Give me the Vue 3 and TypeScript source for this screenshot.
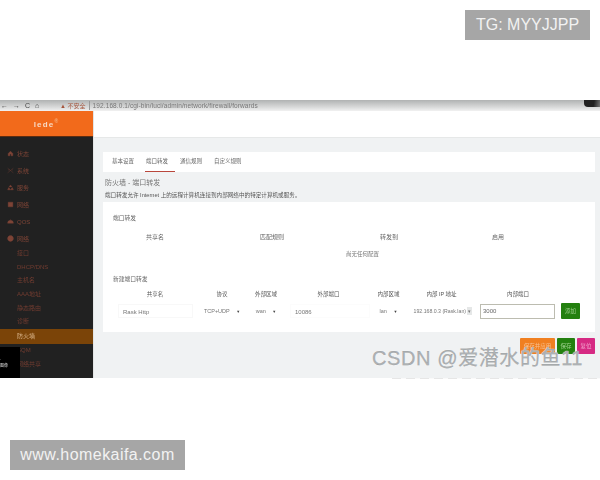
<script setup lang="ts">
const topNav = [
  { label: '状态', icon: 'M2 6 6 2l4 4v4H7V7H5v3H2z' },
  { label: '系统', icon: 'M1 2l10 8M11 2 1 10M2 5h3M8 5h2' },
  { label: '服务', icon: 'M6 1.5 8.5 5h-5zM1 10l2-4 3 4zM6 10l3-4 2 4z' },
  { label: '网络', icon: 'M2 2h8v8H2zM2 5h8' },
  { label: 'QOS', icon: 'M1 9a5 5 0 0 1 10 0zM6 2v3' },
  { label: '网络', icon: 'M6 1a5 5 0 1 0 .01 0zM3 6h6' },
]
const subNav = ['接口', 'DHCP/DNS', '主机名', 'AAA地址', '静态路由', '诊断']
const afterNav = ['防火墙', 'SQM', '网络共享']
const tabs = ['基本设置', '端口转发', '通信规则', '自定义规则']
const ruleCols = ['共享名', '匹配规则', '转发到', '启用']
const formCols = ['共享名', '协议', '外部区域', '外部端口', '内部区域', '内部 IP 地址', '内部端口', '']
</script>

<template>
  <main class="page">
    <div class="shot">
      <div class="urlbar">
        <span class="nav-glyphs">← → C ⌂</span>
        <span class="warn">▲ 不安全</span>
        <span class="url">192.168.0.1/cgi-bin/luci/admin/network/firewall/forwards</span>
        <span class="spacer"></span>
        <span class="avatar"></span>
      </div>
      <div class="layout">
        <aside class="sidebar">
          <div class="logo">lede<sup>®</sup></div>
          <nav class="menu">
            <div v-for="(n, i) in topNav" :key="i" class="item">
              <svg viewBox="0 0 12 12" class="ico"><path :d="n.icon" fill="#7d4436" stroke="#7d4436" stroke-width=".6" /></svg>
              <span>{{ n.label }}</span>
            </div>
            <div v-for="s in subNav" :key="s" class="sub">{{ s }}</div>
            <div class="sub active">{{ afterNav[0] }}</div>
            <div v-for="s in afterNav.slice(1)" :key="s" class="sub">{{ s }}</div>
          </nav>
          <div class="popup">
            <span>·</span>
            <span>图像</span>
          </div>
        </aside>
        <section class="content">
          <div class="head"></div>
          <div class="body">
            <div class="tabs">
              <span v-for="(t, i) in tabs" :key="t" class="tab" :class="{ on: i === 1 }">{{ t }}</span>
            </div>
            <h1 class="title">防火墙 - 端口转发</h1>
            <p class="desc">端口转发允许 Internet 上的远程计算机连接到内部网络中的特定计算机或服务。</p>
            <div class="card">
              <h2 class="sec first">端口转发</h2>
              <div class="rule-head">
                <span v-for="c in ruleCols" :key="c">{{ c }}</span>
              </div>
              <div class="empty">尚无任何配置</div>
              <h2 class="sec second">新建端口转发</h2>
              <div class="form-grid">
                <span v-for="(c, i) in formCols" :key="i" class="fh">{{ c }}</span>
                <span class="field name">Rask Http</span>
                <span class="sel">TCP+UDP <i>▼</i></span>
                <span class="sel">wan <i>▼</i></span>
                <span class="field ext">10086</span>
                <span class="sel">lan <i>▼</i></span>
                <span class="sel ip">192.168.0.3 (Rask.lan) <b>▾</b></span>
                <span class="focus">3000</span>
                <span class="add">添加</span>
              </div>
            </div>
            <div class="actions">
              <span class="btn orange">保存并应用</span>
              <span class="btn green">保存</span>
              <span class="btn pink">复位</span>
            </div>
          </div>
        </section>
      </div>
    </div>
    <div class="strip"></div>
    <div class="mark">CSDN @爱潜水的鱼11</div>
    <div class="badge tg">TG: MYYJJPP</div>
    <div class="badge site">www.homekaifa.com</div>
  </main>
</template>

<style>
html, body { margin: 0; background: #fff; }
</style>

<style scoped>
.page {
  position: relative;
  width: 600px;
  height: 480px;
  padding-top: 100px;
  box-sizing: border-box;
  overflow: hidden;
  background: #fff;
  font-family: "Liberation Sans", "Noto Sans CJK SC", sans-serif;
}
.shot {
  height: 278px;
  display: flex;
  flex-direction: column;
  overflow: hidden;
  filter: blur(0.7px);
}
.urlbar {
  height: 11px;
  flex: none;
  display: flex;
  align-items: center;
  gap: 7px;
  padding: 0;
  background: linear-gradient(#b0b2b2, #dcdddd 70%, #f1f1f1);
  font-size: 6.5px;
  color: #555;
  white-space: nowrap;
}
.nav-glyphs { font-size: 7px; color: #444; word-spacing: 3px; width: 52px; padding-left: 1px; }
.warn { color: #a5543c; border-right: 1px solid #999; padding-right: 3px; font-size: 6px; }
.url { color: #777; margin-left: -4px; letter-spacing: 0.1px; }
.spacer { flex: 1; }
.avatar { width: 16px; height: 7px; margin: -4px 0 0; background: linear-gradient(100deg, #222 60%, #777); border-radius: 0 0 0 4px; }
.layout { flex: 1; display: flex; min-height: 0; }
.sidebar {
  position: relative;
  width: 93px;
  flex: none;
  background: #212121;
  overflow: hidden;
}
.logo {
  height: 25px;
  background: #f26a1b;
  border-bottom: 1px solid #5d2c10;
  color: #f7d9c4;
  font-size: 8px;
  font-weight: 700;
  letter-spacing: 1.2px;
  text-align: center;
  line-height: 27px;
}
.logo sup { font-size: 5px; line-height: 0; color: #f7b27f; }
.menu { padding-top: 8px; font-size: 6px; color: #7d4436; }
.item { height: 17px; display: flex; align-items: center; gap: 3px; padding-left: 7px; }
.ico { width: 7px; height: 7px; }
.sub { height: 13.7px; line-height: 13.7px; padding-left: 17px; white-space: nowrap; color: #723c30; }
.sub.active { height: 15px; line-height: 15px; background: #7b4408; color: #d9b48a; }
.popup {
  position: absolute;
  left: 0;
  bottom: 0;
  width: 20px;
  height: 31px;
  padding-top: 10px;
  box-sizing: border-box;
  background: #000;
  color: #ddd;
  font-size: 4px;
  display: flex;
  flex-direction: column;
}
.content { flex: 1; display: flex; flex-direction: column; background: #f0f2f3; min-width: 0; border-left: 1px solid #e3e5e5; }
.head { height: 26px; flex: none; background: #fff; border-bottom: 1px solid #e6e8e8; }
.body { padding: 14px 5px 0 9px; color: #555; }
.tabs {
  height: 20px;
  display: flex;
  gap: 4px;
  padding-left: 8px;
  background: #fff;
  font-size: 5.5px;
  line-height: 19px;
}
.tab { height: 20px; width: 30px; box-sizing: border-box; padding-left: 1px; color: #666; white-space: nowrap; }
.tab.on { border-bottom: 1px solid #b9473c; }
.title { margin: 5px 0 0; height: 12px; padding-left: 2px; font-size: 7px; line-height: 12px; font-weight: 400; color: #777; }
.desc { margin: 0; height: 13px; padding-left: 2px; font-size: 5.6px; line-height: 12px; color: #555; white-space: nowrap; }
.card { height: 130px; box-sizing: border-box; padding: 12px 13px 0 10px; background: #fff; }
.sec { margin: 0; font-size: 5.75px; font-weight: 400; line-height: 8px; color: #666; }
.second { margin-top: 17px; }
.rule-head {
  display: grid;
  grid-template-columns: 84px 150px 84px 134px;
  margin-top: 11px;
  font-size: 6px;
  line-height: 8px;
  text-align: center;
  color: #666;
}
.empty { margin-top: 9px; text-align: center; font-size: 5.5px; line-height: 8px; color: #777; padding-left: 30px; }
.form-grid {
  display: grid;
  grid-template-columns: 84px 50px 38px 87px 33px 73px 80px 24px;
  grid-template-rows: 8px 16px;
  row-gap: 5px;
  margin-top: 7px;
  align-items: center;
  font-size: 5.5px;
  color: #777;
}
.fh { text-align: center; font-size: 5.5px; line-height: 8px; color: #555; }
.field { height: 14px; line-height: 14px; box-sizing: border-box; border: 1px solid #f8f8f8; padding-left: 4px; font-size: 6px; }
.name { margin-left: 5px; margin-right: 4px; }
.ext { margin-left: 5px; margin-right: 2px; border-color: #fcfcfc; }
.sel { text-align: center; white-space: nowrap; }
.sel i { font-style: normal; font-size: 4px; margin-left: 5px; color: #444; }
.ip { font-size: 5.2px; margin-right: -3px; }
.ip b { background: #e5e7e7; padding: 1px; font-weight: 400; }
.focus {
  height: 15px;
  margin: 0 3px 0 2px;
  box-sizing: border-box;
  border: 1px solid #bcbcb0;
  padding-left: 2px;
  font-size: 6px;
  line-height: 13px;
  color: #666;
}
.add {
  width: 19px;
  height: 16px;
  margin-left: 3px;
  line-height: 16px;
  text-align: center;
  background: #23800f;
  color: #9fd08f;
  border-radius: 1px;
}
.actions { display: flex; justify-content: flex-end; gap: 2px; margin-top: 6px; font-size: 5.5px; }
.btn { height: 16px; line-height: 16px; text-align: center; border-radius: 1px; }
.orange { width: 35px; background: #f07f20; color: #f9c08e; }
.green { width: 18px; background: #23800f; color: #9fd08f; }
.pink { width: 18px; background: #d62a83; color: #f3a3cf; }
.strip {
  position: absolute;
  left: 392px;
  right: 0;
  top: 378px;
  height: 1px;
  background: repeating-linear-gradient(90deg, #e6e6e6 0 9px, #fafafa 9px 14px);
  filter: blur(0.5px);
}
.mark {
  position: absolute;
  left: 372px;
  top: 345px;
  font-size: 20px;
  line-height: 26px;
  letter-spacing: 0.6px;
  white-space: nowrap;
  color: #aeb2b4;
  -webkit-text-stroke: 0.25px #8e9294;
  text-shadow: 0 0 1px #fff, 0 0 1px #fff;
}
.badge {
  position: absolute;
  height: 30px;
  line-height: 30px;
  box-sizing: border-box;
  background: #a6a6a6;
  color: #f2f2f2;
  font-size: 16px;
  text-align: center;
  white-space: nowrap;
}
.tg { left: 465px; top: 10px; width: 125px; }
.site { left: 10px; top: 440px; width: 175px; letter-spacing: 0.45px; }
</style>
